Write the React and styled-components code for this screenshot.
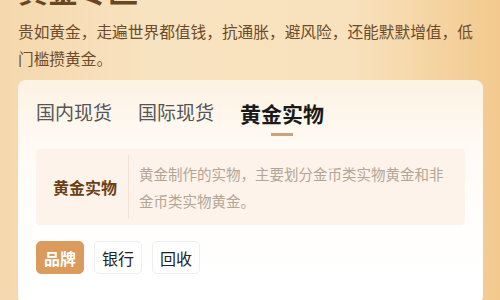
import React from 'react';
import styled, { createGlobalStyle } from 'styled-components';

const GlobalStyle = createGlobalStyle`
    html, body {
        margin: 0;
        padding: 0;
    }
    body {
        font-family: "Noto Sans CJK SC", "Noto Sans", sans-serif;
    }
`;

const Page = styled.div`
    width: 500px;
    height: 300px;
    overflow: hidden;
    box-sizing: border-box;
    padding: 0 17px 0 18px;
    background: linear-gradient(90deg, #f5d8ad 0%, #f8e3c0 30%, #f8e2bd 70%, #f3c98e 100%);
`;

const Title = styled.h1`
    margin: -27px 0 0;
    font-size: 30px;
    line-height: 32px;
    font-weight: 700;
    color: #6a4622;
`;

const Intro = styled.p`
    margin: 13px 0 0;
    font-size: 15.7px;
    line-height: 27px;
    color: #6e4b2a;
`;

const Card = styled.div`
    margin-top: 8px;
    border-radius: 8px;
    background: linear-gradient(180deg, #fdf2e3 0%, #fff9f2 25%, #fffefd 60%, #ffffff 100%);
    padding: 3px 18px 30px;
`;

const Tabs = styled.div`
    display: flex;
    align-items: flex-end;
    gap: 26px;
    height: 46px;
`;

const Tab = styled.div`
    position: relative;
    font-size: ${p => (p.$active ? '21px' : '19px')};
    line-height: 32px;
    font-weight: ${p => (p.$active ? 700 : 400)};
    color: ${p => (p.$active ? '#1a1a1a' : '#555')};
    padding-bottom: ${p => (p.$active ? '0' : '1px')};
`;

const Indicator = styled.span`
    position: absolute;
    left: 50%;
    bottom: -7px;
    width: 22px;
    height: 3px;
    margin-left: -11px;
    background: #c9a480;
`;

const Info = styled.div`
    display: flex;
    margin-top: 20px;
    background: #fdf3ea;
    border-radius: 4px;
    height: 76px;
`;

const Label = styled.div`
    flex: 0 0 93px;
    display: flex;
    align-items: center;
    box-sizing: border-box;
    padding-left: 17px;
    font-size: 16px;
    font-weight: 700;
    color: #6b3f14;
    border-right: 1px solid #f4e3d4;
    margin: 6px 0;
`;

const Desc = styled.div`
    display: flex;
    align-items: center;
    padding: 0 20px 0 10px;
    font-size: 14.5px;
    line-height: 27px;
    color: #b3a596;
`;

const Chips = styled.div`
    display: flex;
    gap: 10px;
    margin-top: 16px;
`;

const Chip = styled.div`
    width: 48px;
    height: 33px;
    box-sizing: border-box;
    display: flex;
    align-items: center;
    justify-content: center;
    border-radius: 5px;
    font-size: 16px;
    background: ${p => (p.$active ? '#da9b5c' : '#fff')};
    color: ${p => (p.$active ? '#fff' : '#222')};
    font-weight: ${p => (p.$active ? 700 : 400)};
    border: 1px solid ${p => (p.$active ? '#da9b5c' : '#eeeeee')};
`;

const tabs = ['国内现货', '国际现货', '黄金实物'];
const chips = ['品牌', '银行', '回收'];

const App = () => {
    return (
        <Page>
            <GlobalStyle />
            <Title>黄金专区</Title>
            <Intro>贵如黄金，走遍世界都值钱，抗通胀，避风险，还能默默增值，低门槛攒黄金。</Intro>
            <Card>
                <Tabs>
                    {tabs.map((t, i) => (
                        <Tab key={t} $active={i === 2}>
                            {t}
                            {i === 2 && <Indicator />}
                        </Tab>
                    ))}
                </Tabs>
                <Info>
                    <Label>黄金实物</Label>
                    <Desc>黄金制作的实物，主要划分金币类实物黄金和非金币类实物黄金。</Desc>
                </Info>
                <Chips>
                    {chips.map((c, i) => (
                        <Chip key={c} $active={i === 0}>{c}</Chip>
                    ))}
                </Chips>
            </Card>
        </Page>
    );
};

export default App;
